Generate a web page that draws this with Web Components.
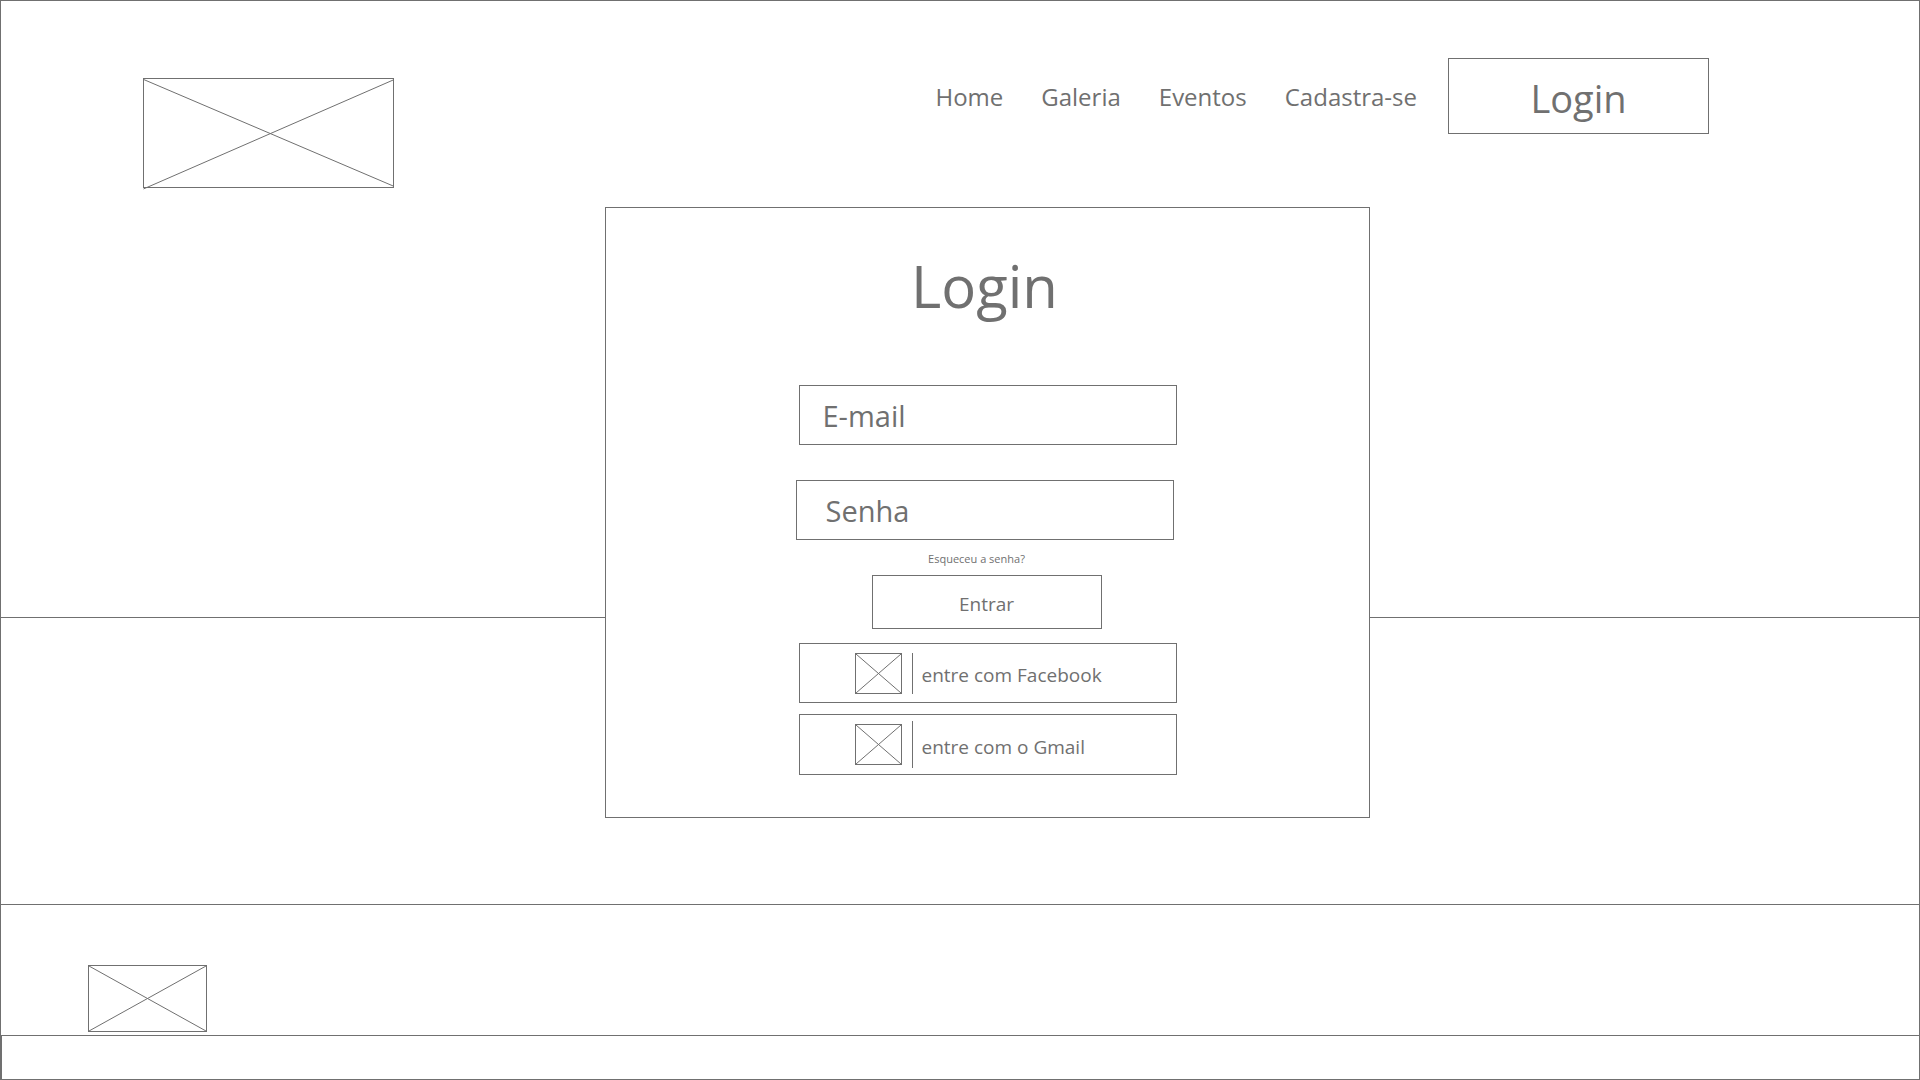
<!DOCTYPE html>
<html lang="pt-BR">
<head>
<meta charset="utf-8">
<meta name="viewport" content="width=device-width, initial-scale=1">
<title>Login</title>
<style>
  :root { --line: #707070; --paper: #fff; }
  body { margin: 0; background: var(--paper); color: var(--line); font-family: "Open Sans", "Noto Sans", sans-serif; }
</style>
</head>
<body>
<login-page></login-page>

<script>
  const define = (name, html, setup) => {
    const template = document.createElement('template');
    template.innerHTML = '<style>*{box-sizing:border-box}</style>' + html;
    customElements.define(name, class extends HTMLElement {
      constructor() {
        super();
        this.attachShadow({ mode: 'open' }).append(template.content.cloneNode(true));
      }
      connectedCallback() { if (setup) setup(this, this.shadowRoot); }
    });
  };

  // Crossed box that stands in for an image
  define('image-placeholder', `
    <style>
      :host { display: block; box-sizing: border-box; flex: none; border: 1px solid var(--line); }
      svg { display: block; width: 100%; height: 100%; overflow: visible; }
      line { stroke: var(--line); stroke-width: 1; vector-effect: non-scaling-stroke; }
    </style>
    <svg viewBox="0 0 100 100" preserveAspectRatio="none" aria-hidden="true">
      <line class="down" x1="0" y1="0" x2="100" y2="100"/><line class="up" x1="0" y1="100" x2="100" y2="0"/>
    </svg>`, (host, root) => {
      // In the loose variant the strokes run slightly past the frame
      if (!host.hasAttribute('loose')) return;
      const down = root.querySelector('.down'), up = root.querySelector('.up');
      down.setAttribute('y1', 0.6); down.setAttribute('x2', 100.4); down.setAttribute('y2', 99.4);
      up.setAttribute('x1', -0.2); up.setAttribute('y1', 101.8); up.setAttribute('x2', 100.4); up.setAttribute('y2', 0.6);
    });

  define('nav-link', `
    <style>
      :host { display: block; }
      a { display: block; padding-top: 2px; color: inherit; text-decoration: none; font-size: 24px; line-height: 36px; }
    </style>
    <a href="#"><slot></slot></a>`);

  define('outline-button', `
    <style>
      :host { display: block; }
      button { display: flex; align-items: center; justify-content: center; width: 100%; height: 100%;
        margin: 0; padding: 4px 0 0; border: 1px solid var(--line); border-radius: 0; background: var(--paper);
        color: inherit; font: inherit; cursor: pointer; }
    </style>
    <button type="button"><slot></slot></button>`);

  define('site-header', `
    <style>
      :host { display: flex; justify-content: space-between; align-items: flex-start; padding: 57px 210px 19px 142px; }
      image-placeholder { width: 251px; height: 110px; margin-top: 20px; }
      nav { display: flex; align-items: center; gap: 31px; }
      .links { display: flex; gap: 38px; }
      outline-button { width: 261px; height: 76px; font-size: 38px; line-height: 52px; }
    </style>
    <image-placeholder loose></image-placeholder>
    <nav>
      <div class="links"><nav-link>Home</nav-link><nav-link>Galeria</nav-link><nav-link>Eventos</nav-link><nav-link>Cadastra-se</nav-link></div>
      <outline-button>Login</outline-button>
    </nav>`);

  define('text-field', `
    <style>
      :host { display: block; width: 378px; }
      input { display: block; width: 100%; height: 60px; margin: 0; padding: 0 23px; border: 1px solid var(--line);
        border-radius: 0; background: var(--paper); color: inherit; font: inherit; font-size: 29px; outline: 0; }
      :host([inset]) input { padding-left: 29px; }
      input::placeholder { color: inherit; opacity: 1; }
    </style>
    <input>`, (host, root) => {
      const input = root.querySelector('input');
      input.type = host.getAttribute('type');
      input.placeholder = host.getAttribute('label');
      input.setAttribute('aria-label', host.getAttribute('label'));
    });

  define('social-button', `
    <style>
      :host { display: block; width: 378px; }
      button { display: flex; align-items: center; width: 100%; height: 60px; margin: 0; padding: 0 0 0 55px;
        border: 1px solid var(--line); border-radius: 0; background: var(--paper); color: inherit;
        font: inherit; font-size: 19px; line-height: 28px; text-align: left; cursor: pointer; }
      image-placeholder { width: 47px; height: 41px; }
      i { width: 1px; height: 41px; margin: 0 9px 0 10px; background: var(--line); }
      :host([tall]) button { height: 61px; }
      :host([tall]) i { height: 47px; }
      span { padding-top: 4px; }
    </style>
    <button type="button"><image-placeholder></image-placeholder><i></i><span><slot></slot></span></button>`);

  define('login-card', `
    <style>
      :host { display: block; box-sizing: border-box; width: 765px; border: 1px solid var(--line); background: var(--paper); }
      form { display: flex; flex-direction: column; align-items: center; padding: 38px 0 42px; }
      h1 { margin: 0 6px 59px 0; font-size: 58px; line-height: 80px; font-weight: 400; }
      .password { margin: 35px 6px 0 0; }
      a { margin: 10px 22px 0 0; color: inherit; text-decoration: none; font-size: 11px; line-height: 18px; }
      .submit { width: 230px; height: 54px; margin: 7px 2px 14px 0; font-size: 19px; line-height: 28px; }
      social-button + social-button { margin-top: 11px; }
    </style>
    <form>
      <h1>Login</h1>
      <text-field type="email" label="E-mail"></text-field>
      <text-field class="password" type="password" label="Senha" inset></text-field>
      <a href="#">Esqueceu a senha?</a>
      <outline-button class="submit">Entrar</outline-button>
      <social-button>entre com Facebook</social-button>
      <social-button tall>entre com o Gmail</social-button>
    </form>`);

  define('site-footer', `
    <style>
      :host { display: block; border-top: 1px solid var(--line); }
      .brand { padding: 60px 87px 3px; }
      image-placeholder { width: 119px; height: 67px; }
      .bar { height: 44px; border: 1px solid var(--line); border-width: 1px 0 0 1px; }
    </style>
    <div class="brand"><image-placeholder></image-placeholder></div>
    <div class="bar"></div>`);

  define('login-page', `
    <style>
      :host { display: flex; flex-direction: column; box-sizing: border-box; min-height: 100vh; border: 1px solid var(--line); }
      .stage { flex: 1; display: grid; }
      .bands, .content { grid-area: 1 / 1; }
      .bands { display: grid; grid-template-rows: 617fr 286fr; }
      .bands div:first-child { border-bottom: 1px solid var(--line); }
      main { display: flex; justify-content: center; padding: 0 0 85px 55px; }
    </style>
    <div class="stage">
      <div class="bands"><div></div><div></div></div>
      <div class="content">
        <site-header></site-header>
        <main><login-card></login-card></main>
      </div>
    </div>
    <site-footer></site-footer>`);
</script>
</body>
</html>
